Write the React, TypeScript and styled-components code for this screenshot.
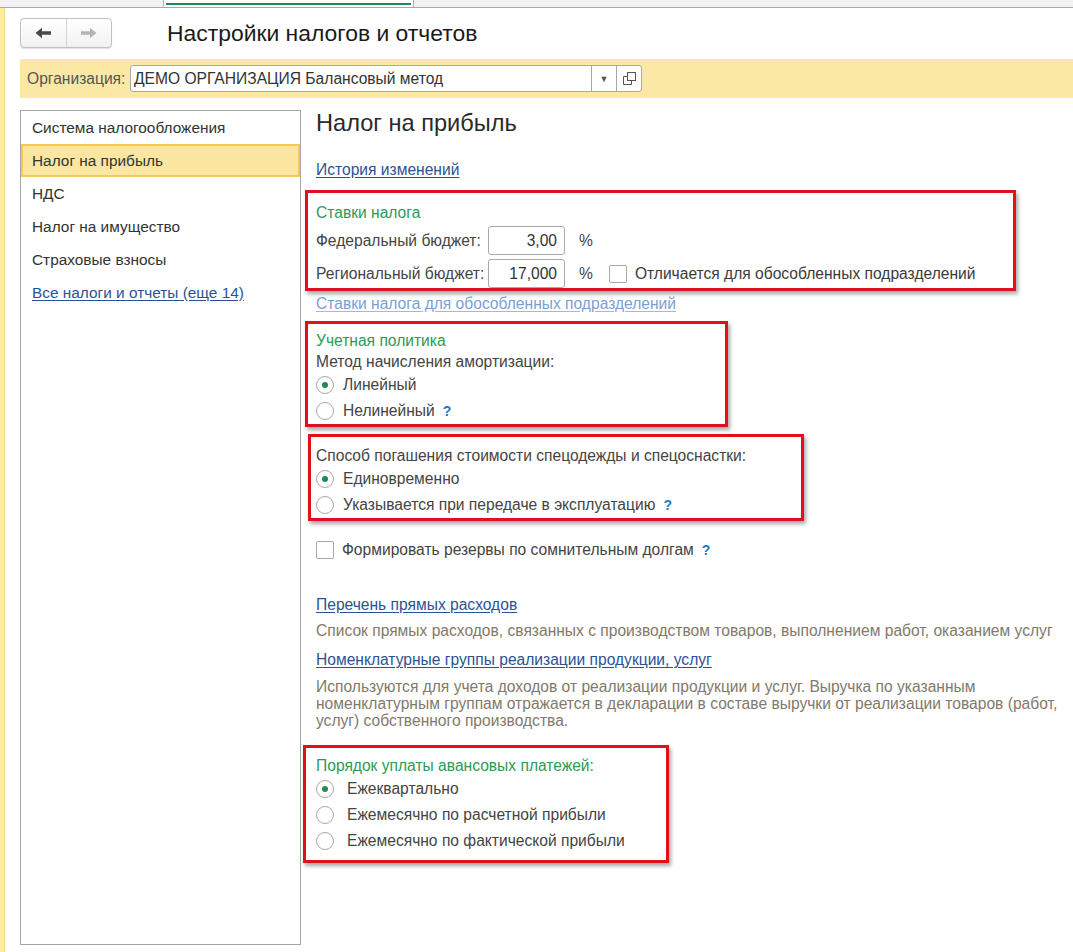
import { createGlobalStyle, styled } from 'styled-components';

const GlobalStyle = createGlobalStyle`
  html, body {
    margin: 0;
    padding: 0;
    background: #fff;
  }
  body {
    font-family: 'Liberation Sans', Arial, sans-serif;
    font-size: 15.6px;
    color: #3a3a3a;
  }
  * {
    box-sizing: border-box;
  }
`;

const Page = styled.div`
  display: flex;
  flex-direction: column;
  height: 952px;
  width: 1073px;
  overflow: hidden;
`;

const TopStrip = styled.div`
  height: 8px;
  flex: none;
  background: #f2f2f2;
  border-bottom: 1px solid #a8a8a8;
  display: flex;
`;

const Tab = styled.div`
  margin-left: 163px;
  width: 251px;
  background: #fff;
  border-left: 1px solid #b5b5b5;
  border-right: 1px solid #b5b5b5;
  padding: 3px 2px 0;

  &::before {
    content: '';
    display: block;
    height: 2px;
    background: #1f8a55;
  }
`;

const Body = styled.div`
  flex: 1;
  display: flex;
  min-height: 0;
`;

const Stripe = styled.div`
  width: 5px;
  flex: none;
  background: #fdeba4;
  border-right: 1px solid #efd98a;
`;

const Main = styled.div`
  flex: 1;
  display: flex;
  flex-direction: column;
  padding-left: 15px;
  min-width: 0;
`;

const NavRow = styled.div`
  display: flex;
  align-items: center;
  margin-top: 10px;
  height: 30px;
`;

const NavGroup = styled.div`
  display: flex;
  width: 92px;
  height: 30px;
  border: 1px solid #c0c0c0;
  border-radius: 4px;
  background: linear-gradient(#ffffff, #f1f1f1);
  box-shadow: 0 1px 1px rgba(0, 0, 0, 0.12);
`;

const NavButton = styled.div`
  flex: 1;
  display: flex;
  align-items: center;
  justify-content: center;
  & + & {
    border-left: 1px solid #d4d4d4;
  }
`;

const Title = styled.h1`
  margin: 0 0 0 55px;
  font-size: 22.9px;
  font-weight: 400;
  color: #1a1a1a;
`;

const OrgBar = styled.div`
  margin-top: 11px;
  height: 39px;
  background: #fbe8a4;
  display: flex;
  align-items: center;
  padding-left: 7px;
`;

const OrgLabel = styled.span`
  color: #555;
  width: 103px;
`;

const OrgField = styled.div`
  display: flex;
  height: 27px;
  width: 512px;
  background: #fff;
  border: 1px solid #a9a9a9;
  border-radius: 3px;
  overflow: hidden;
`;

const OrgValue = styled.div`
  flex: 1;
  display: flex;
  align-items: center;
  padding-left: 3px;
  color: #333;
  white-space: nowrap;
`;

const FieldButton = styled.div`
  width: 25px;
  display: flex;
  align-items: center;
  justify-content: center;
  border-left: 1px solid #a9a9a9;
  color: #555;
  font-size: 9px;
`;

const Work = styled.div`
  flex: 1;
  display: flex;
  margin-top: 12px;
  margin-bottom: 7px;
  min-height: 0;
`;

const SidePanel = styled.div`
  width: 281px;
  flex: none;
  border: 1px solid #a5a5a5;
  display: flex;
  flex-direction: column;
  font-size: 15.4px;
`;

const SideItem = styled.div<{ $active?: boolean; $link?: boolean }>`
  height: 33px;
  display: flex;
  align-items: center;
  padding-left: ${(p) => (p.$active ? 9 : 11)}px;
  color: ${(p) => (p.$link ? '#2c5295' : '#333')};
  text-decoration: ${(p) => (p.$link ? 'underline' : 'none')};
  text-underline-offset: 2px;
  background: ${(p) => (p.$active ? '#fce7a2' : 'transparent')};
  border: ${(p) => (p.$active ? '2px solid #f3ca55' : 'none')};
`;

const Content = styled.div`
  flex: 1;
  margin-left: 15px;
  display: flex;
  flex-direction: column;
  align-items: flex-start;
`;

const Heading = styled.h2`
  margin: 0;
  height: 26px;
  line-height: 26px;
  font-size: 23.6px;
  font-weight: 400;
  color: #2a2a2a;
`;

const Link = styled.a<{ $light?: boolean; $top: number }>`
  display: block;
  margin-top: ${(p) => p.$top}px;
  line-height: 20px;
  color: ${(p) => (p.$light ? '#7b9fd4' : '#2c5295')};
  text-decoration: underline;
  text-underline-offset: 2px;
  text-decoration-color: ${(p) => (p.$light ? '#9fb9e0' : '#2c5295')};
  cursor: pointer;
`;

const Note = styled.p<{ $top: number }>`
  margin: ${(p) => p.$top}px 0 0;
  line-height: 17px;
  color: #82796a;
  max-width: 752px;
`;

const RedBox = styled.div<{ $top: number; $left: number; $width: number; $padTop: number; $padBottom?: number }>`
  margin-top: ${(p) => p.$top}px;
  margin-left: -${(p) => p.$left}px;
  width: ${(p) => p.$width}px;
  padding: ${(p) => p.$padTop}px 0 ${(p) => p.$padBottom ?? 0}px ${(p) => p.$left - 3}px;
  border: 3px solid #e0101c;
  box-shadow: 2px 3px 4px rgba(0, 0, 0, 0.35);
  display: flex;
  flex-direction: column;
`;

const GroupTitle = styled.div`
  line-height: 21px;
  color: #2d9a55;
`;

const Label = styled.div`
  line-height: 21px;
  color: #444;
`;

const FieldRow = styled.div<{ $top: number }>`
  display: flex;
  align-items: center;
  height: 29px;
  margin-top: ${(p) => p.$top}px;
`;

const FieldLabel = styled.span`
  width: 172px;
  color: #444;
`;

const NumberInput = styled.div`
  width: 77px;
  height: 29px;
  border: 1px solid #a9a9a9;
  border-radius: 3px;
  display: flex;
  align-items: center;
  justify-content: flex-end;
  padding-right: 7px;
  color: #333;
`;

const Percent = styled.span`
  margin-left: 14px;
  color: #444;
`;

const Option = styled.div<{ $top?: number }>`
  display: flex;
  align-items: center;
  height: 26px;
  margin-top: ${(p) => p.$top ?? 0}px;
  color: #444;
`;

const Radio = styled.span<{ $checked?: boolean; $gap?: number }>`
  width: 18px;
  height: 18px;
  border-radius: 50%;
  border: 1px solid #a8a8a8;
  background: #fff;
  margin-right: ${(p) => p.$gap ?? 9}px;
  display: flex;
  align-items: center;
  justify-content: center;
  flex: none;

  &::after {
    content: '';
    width: 6px;
    height: 6px;
    border-radius: 50%;
    background: ${(p) => (p.$checked ? '#1d8c4c' : 'transparent')};
  }
`;

const Check = styled.span<{ $gap?: number }>`
  width: 18px;
  height: 18px;
  border: 1px solid #a8a8a8;
  border-radius: 2px;
  background: #fff;
  flex: none;
  margin-left: ${(p) => p.$gap ?? 0}px;
  margin-right: 8px;
`;

const Help = styled.span`
  margin-left: 8px;
  color: #2277c2;
  font-weight: 700;
  font-size: 14px;
`;

const ArrowLeft = ({ color }: { color: string }) => (
  <svg width="17" height="12" viewBox="0 0 17 12">
    <path d="M0.5 6 L7 0.8 V4.3 H16 V7.7 H7 V11.2 Z" fill={color} />
  </svg>
);

const ArrowRight = ({ color }: { color: string }) => (
  <svg width="17" height="12" viewBox="0 0 17 12">
    <path d="M16.5 6 L10 0.8 V4.3 H1 V7.7 H10 V11.2 Z" fill={color} />
  </svg>
);

const OpenIcon = () => (
  <svg width="13" height="13" viewBox="0 0 13 13" fill="none" stroke="#555" strokeWidth="1">
    <rect x="4.5" y="0.5" width="8" height="8" />
    <path d="M4.5 4.5 H0.5 V12.5 H8.5 V8.5" />
  </svg>
);

const sideItems = ['Система налогообложения', 'Налог на прибыль', 'НДС', 'Налог на имущество', 'Страховые взносы'];

const advanceOptions = ['Ежеквартально', 'Ежемесячно по расчетной прибыли', 'Ежемесячно по фактической прибыли'];

const App = () => {
  return (
    <Page>
      <GlobalStyle />
      <TopStrip>
        <Tab />
      </TopStrip>
      <Body>
        <Stripe />
        <Main>
          <NavRow>
            <NavGroup>
              <NavButton>
                <ArrowLeft color="#4a4a4a" />
              </NavButton>
              <NavButton>
                <ArrowRight color="#b4b4b4" />
              </NavButton>
            </NavGroup>
            <Title>Настройки налогов и отчетов</Title>
          </NavRow>

          <OrgBar>
            <OrgLabel>Организация:</OrgLabel>
            <OrgField>
              <OrgValue>ДЕМО ОРГАНИЗАЦИЯ Балансовый метод</OrgValue>
              <FieldButton>▼</FieldButton>
              <FieldButton>
                <OpenIcon />
              </FieldButton>
            </OrgField>
          </OrgBar>

          <Work>
            <SidePanel>
              {sideItems.map((item) => (
                <SideItem key={item} $active={item === 'Налог на прибыль'}>
                  {item}
                </SideItem>
              ))}
              <SideItem $link>Все налоги и отчеты (еще 14)</SideItem>
            </SidePanel>

            <Content>
              <Heading>Налог на прибыль</Heading>
              <Link $top={24}>История изменений</Link>

              <RedBox $top={10} $left={11} $width={711} $padTop={9}>
                <GroupTitle>Ставки налога</GroupTitle>
                <FieldRow $top={3}>
                  <FieldLabel>Федеральный бюджет:</FieldLabel>
                  <NumberInput>3,00</NumberInput>
                  <Percent>%</Percent>
                </FieldRow>
                <FieldRow $top={4}>
                  <FieldLabel>Региональный бюджет:</FieldLabel>
                  <NumberInput>17,000</NumberInput>
                  <Percent>%</Percent>
                  <Check $gap={16} />
                  <span>Отличается для обособленных подразделений</span>
                </FieldRow>
              </RedBox>

              <Link $light $top={3}>
                Ставки налога для обособленных подразделений
              </Link>

              <RedBox $top={7} $left={11} $width={423} $padTop={6}>
                <GroupTitle>Учетная политика</GroupTitle>
                <Label>Метод начисления амортизации:</Label>
                <Option>
                  <Radio $checked />
                  Линейный
                </Option>
                <Option>
                  <Radio />
                  Нелинейный
                  <Help>?</Help>
                </Option>
              </RedBox>

              <RedBox $top={7} $left={8} $width={496} $padTop={8}>
                <Label>Способ погашения стоимости спецодежды и спецоснастки:</Label>
                <Option>
                  <Radio $checked />
                  Единовременно
                </Option>
                <Option>
                  <Radio />
                  Указывается при передаче в эксплуатацию
                  <Help>?</Help>
                </Option>
              </RedBox>

              <Option $top={16}>
                <Check />
                Формировать резервы по сомнительным долгам
                <Help>?</Help>
              </Option>

              <Link $top={32}>Перечень прямых расходов</Link>
              <Note $top={7}>
                Список прямых расходов, связанных с производством товаров, выполнением работ, оказанием услуг
              </Note>
              <Link $top={11}>Номенклатурные группы реализации продукции, услуг</Link>
              <Note $top={8}>
                Используются для учета доходов от реализации продукции и услуг. Выручка по указанным
                номенклатурным группам отражается в декларации в составе выручки от реализации товаров (работ,
                услуг) собственного производства.
              </Note>

              <RedBox $top={16} $left={13} $width={366} $padTop={7} $padBottom={6}>
                <GroupTitle>Порядок уплаты авансовых платежей:</GroupTitle>
                {advanceOptions.map((item, i) => (
                  <Option key={item}>
                    <Radio $checked={i === 0} $gap={13} />
                    {item}
                  </Option>
                ))}
              </RedBox>
            </Content>
          </Work>
        </Main>
      </Body>
    </Page>
  );
};

export default App;
